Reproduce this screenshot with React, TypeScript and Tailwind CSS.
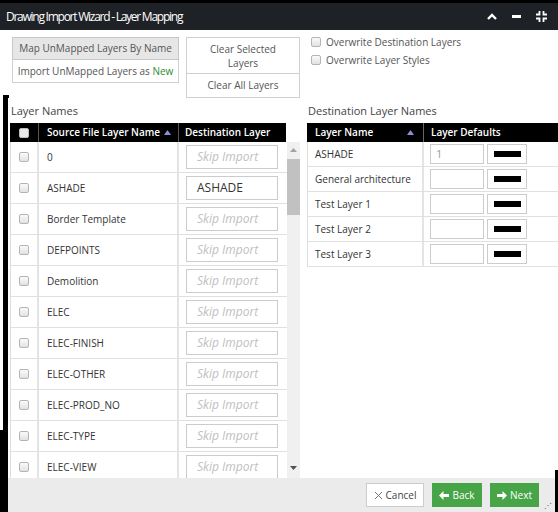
import React from 'react';

const sourceLayers = [
  { name: '0', dest: '' },
  { name: 'ASHADE', dest: 'ASHADE' },
  { name: 'Border Template', dest: '' },
  { name: 'DEFPOINTS', dest: '' },
  { name: 'Demolition', dest: '' },
  { name: 'ELEC', dest: '' },
  { name: 'ELEC-FINISH', dest: '' },
  { name: 'ELEC-OTHER', dest: '' },
  { name: 'ELEC-PROD_NO', dest: '' },
  { name: 'ELEC-TYPE', dest: '' },
  { name: 'ELEC-VIEW', dest: '' },
];

const destLayers = [
  { name: 'ASHADE', value: '1' },
  { name: 'General architecture', value: '' },
  { name: 'Test Layer 1', value: '' },
  { name: 'Test Layer 2', value: '' },
  { name: 'Test Layer 3', value: '' },
];

function Box({ dark = false }: { dark?: boolean }) {
  return (
    <span
      className={
        dark
          ? 'inline-block shrink-0 w-[10px] h-[10px] rounded-[2px] bg-[#e8e8e8] border border-[#bbb]'
          : 'inline-block shrink-0 w-[10px] h-[10px] rounded-[2px] bg-gradient-to-b from-[#fafafa] to-[#e2e2e2] border border-[#b5b5b5]'
      }
    />
  );
}

function SortArrow() {
  return (
    <svg width="7" height="5" viewBox="0 0 7 5" className="shrink-0">
      <path d="M3.5 0 L7 5 L0 5 Z" fill="#8a8fd6" />
    </svg>
  );
}

export default function App() {
  return (
    <div
      className="relative w-[558px] h-[512px] overflow-hidden bg-white flex flex-col text-[#333] whitespace-nowrap"
      style={{ fontFamily: '"Open Sans", "Liberation Sans", sans-serif' }}
    >
      {/* ---------------- TITLE BAR ---------------- */}
      <div className="h-[3px] bg-black shrink-0" />
      <div className="h-[27px] shrink-0 bg-[#1e2125] flex items-center justify-between pl-[6px] pr-[11px]">
        <span className="text-white text-[12px] tracking-[-1.25px]">
          Drawing Import Wizard - Layer Mapping
        </span>
        <div className="flex items-center gap-[15px]">
          <svg width="10" height="7" viewBox="0 0 10 7">
            <path d="M1 6 L5 2 L9 6" stroke="white" strokeWidth="2.4" fill="none" />
          </svg>
          <span className="block w-[9px] h-[3px] bg-white" />
          <svg width="11" height="11" viewBox="0 0 11 11">
            <path
              d="M0 3.5 H3.5 V0 M7.5 0 V3.5 H11 M0 7.5 H3.5 V11 M7.5 11 V7.5 H11"
              stroke="white"
              strokeWidth="1.8"
              fill="none"
            />
          </svg>
        </div>
      </div>

      {/* ---------------- TOP OPTIONS ---------------- */}
      <div className="h-[70px] shrink-0 flex pt-[7px] pl-[12px] text-[10px] text-[#555]">
        <div className="w-[167px] flex flex-col">
          <div className="h-[23px] flex items-center justify-center bg-[#e6e6e6] border border-[#c8c8c8]">
            Map UnMapped Layers By Name
          </div>
          <div className="h-[23px] flex items-center justify-center bg-white border border-t-0 border-[#d0d0d0]">
            Import UnMapped Layers as&nbsp;<span className="text-[#2e8b2e]">New</span>
          </div>
        </div>
        <div className="ml-[7px] w-[114px] flex flex-col">
          <div className="h-[37px] flex items-center justify-center text-center leading-[14px] border border-[#d0d0d0]">
            Clear Selected
            <br />
            Layers
          </div>
          <div className="h-[24px] flex items-center justify-center border border-t-0 border-[#d0d0d0]">
            Clear All Layers
          </div>
        </div>
        <div className="ml-[11px] -mt-[2px] flex flex-col gap-[4px]">
          <label className="h-[14px] flex items-center gap-[5px]">
            <Box />
            Overwrite Destination Layers
          </label>
          <label className="h-[14px] flex items-center gap-[5px]">
            <Box />
            Overwrite Layer Styles
          </label>
        </div>
      </div>

      {/* ---------------- LAYER TABLES ---------------- */}
      <div className="h-[378px] shrink-0 flex">
        {/* source layers */}
        <div className="ml-[10px] w-[290px] flex flex-col">
          <div className="h-[23px] flex items-center text-[11px] text-[#444] pl-[1px]">Layer Names</div>
          <div className="h-[19px] w-[276px] flex bg-black text-white text-[10px] font-semibold">
            <div className="w-[29px] flex items-center justify-center border-r border-[#555]">
              <Box dark />
            </div>
            <div className="w-[140px] flex items-center justify-between pl-[8px] pr-[7px] border-r border-[#555]">
              Source File Layer Name
              <SortArrow />
            </div>
            <div className="flex-1 flex items-center pl-[6px]">Destination Layer</div>
          </div>
          <div className="h-[336px] flex overflow-hidden">
            <div className="w-[277px] border-l border-[#ddd]">
              {sourceLayers.map(l => (
                <div key={l.name} className="h-[31px] flex border-b border-[#e0e0e0] text-[10px]">
                  <div className="w-[28px] flex items-center justify-center border-r-2 border-[#e4e4e4]">
                    <Box />
                  </div>
                  <div className="w-[140px] flex items-center pl-[8px] border-r-2 border-[#e4e4e4]">{l.name}</div>
                  <div className="flex-1 flex items-center pl-[7px]">
                    <div className="w-[92px] h-[24px] border border-[#ccc] flex items-center pl-[10px]">
                      {l.dest ? (
                        <span className="text-[12px] text-[#333]">{l.dest}</span>
                      ) : (
                        <span className="text-[12px] italic text-[#c0c0c0]">Skip Import</span>
                      )}
                    </div>
                  </div>
                </div>
              ))}
            </div>
            <div className="w-[13px] bg-[#f0f0f0] flex flex-col items-center">
              <svg width="7" height="4" viewBox="0 0 7 4" className="mt-[6px]">
                <path d="M3.5 0 L7 4 L0 4 Z" fill="#a3a3a3" />
              </svg>
              <div className="mt-[7px] w-[13px] h-[56px] bg-[#c1c1c1]" />
              <div className="flex-1" />
              <svg width="7" height="4" viewBox="0 0 7 4" className="mb-[8px]">
                <path d="M0 0 L7 0 L3.5 4 Z" fill="#505050" />
              </svg>
            </div>
          </div>
        </div>

        {/* destination layers */}
        <div className="ml-[7px] flex-1 flex flex-col">
          <div className="h-[23px] flex items-center text-[11px] text-[#444] pl-[1px]">Destination Layer Names</div>
          <div className="h-[19px] flex bg-black text-white text-[10px] font-semibold">
            <div className="w-[117px] flex items-center justify-between pl-[8px] pr-[9px] border-r border-[#666]">
              Layer Name
              <SortArrow />
            </div>
            <div className="flex-1 flex items-center pl-[7px]">Layer Defaults</div>
          </div>
          <div className="border-l border-[#ddd]">
            {destLayers.map(l => (
              <div key={l.name} className="h-[25px] flex border-b border-[#e0e0e0] text-[10px]">
                <div className="w-[116px] flex items-center pl-[7px] border-r-2 border-[#e4e4e4]">{l.name}</div>
                <div className="flex items-center pl-[6px] gap-[3px]">
                  <div className="w-[54px] h-[20px] border border-[#ccc] flex items-center pl-[5px] text-[11px] text-[#999]">
                    {l.value}
                  </div>
                  <div className="w-[40px] h-[20px] border border-[#ccc] flex items-center justify-center">
                    <span className="block w-[27px] h-[6px] bg-black" />
                  </div>
                </div>
              </div>
            ))}
          </div>
        </div>
      </div>

      {/* ---------------- FOOTER ---------------- */}
      <div className="flex-1 bg-[#ebebeb] flex items-center justify-end gap-[8px] pr-[19px] text-[10px]">
        <button className="h-[24px] w-[58px] bg-white border border-[#ccc] text-[#444] flex items-center justify-center gap-[3px]">
          <svg width="9" height="9" viewBox="0 0 9 9">
            <path d="M1 1 L8 8 M8 1 L1 8" stroke="#777" strokeWidth="1" />
          </svg>
          Cancel
        </button>
        <button className="h-[24px] w-[50px] bg-[#47a447] text-white flex items-center justify-center gap-[3px]">
          <svg width="10" height="9" viewBox="0 0 10 9">
            <path d="M0 4.5 L4.5 0 L4.5 3 L10 3 L10 6 L4.5 6 L4.5 9 Z" fill="white" />
          </svg>
          Back
        </button>
        <button className="h-[24px] w-[49px] bg-[#47a447] text-white flex items-center justify-center gap-[3px]">
          <svg width="10" height="9" viewBox="0 0 10 9">
            <path d="M10 4.5 L5.5 0 L5.5 3 L0 3 L0 6 L5.5 6 L5.5 9 Z" fill="white" />
          </svg>
          Next
        </button>
      </div>

      {/* window edges behind the dialog */}
      <div className="absolute left-[3px] top-[95px] w-[6px] h-[3px] bg-black" />
      <div className="absolute left-[3px] top-[95px] w-[5px] bottom-0 bg-black" />
      <div className="absolute left-0 top-[430px] w-[8px] bottom-0 bg-black" />
      <div className="absolute right-0 top-[470px] w-[3px] bottom-0 bg-black" />
      <span className="absolute right-[6px] bottom-[3px] text-[8px] leading-none text-[#555]">⋰</span>
    </div>
  );
}
